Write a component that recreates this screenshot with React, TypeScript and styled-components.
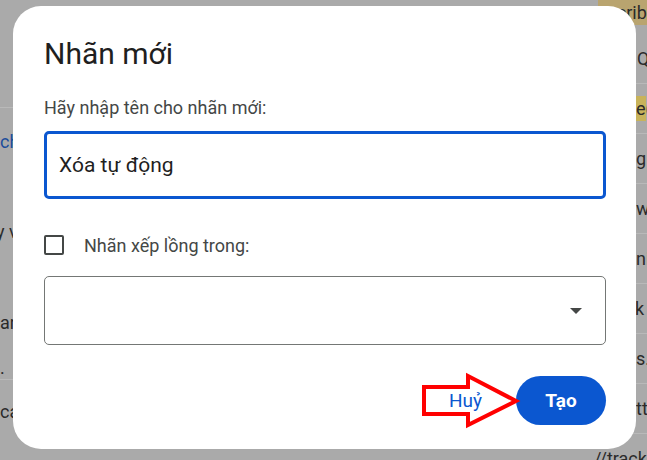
import React from 'react';
import styled, { createGlobalStyle } from 'styled-components';

const GlobalStyle = createGlobalStyle`
  html, body {
    margin: 0;
    padding: 0;
    background: #aaaaaa;
  }
  body {
    font-family: Roboto, "Liberation Sans", Arial, sans-serif;
  }
`;

// Whole window: dimmed mail list with the dialog over it
const Screen = styled.div`
  position: relative;
  width: 647px;
  height: 460px;
  overflow: hidden;
  background: #aaaaaa;
  display: flex;
  justify-content: space-between;
`;

// Left pane of the mail list (mostly hidden)
const LeftPane = styled.div`
  width: 40px;
  display: flex;
  flex-direction: column;
`;

const LeftRow = styled.div<{ h: number; line?: boolean; blue?: boolean; shift?: number }>`
  height: ${(p) => p.h}px;
  box-sizing: border-box;
  display: flex;
  align-items: center;
  margin-left: ${(p) => p.shift || 0}px;
  white-space: nowrap;
  font-size: 18px;
  color: ${(p) => (p.blue ? '#1b4d9b' : '#2a2a2a')};
  border-bottom: ${(p) => (p.line ? '1px solid #b9b9b9' : 'none')};
`;

// Right pane of the mail list (only a sliver shows)
const RightPane = styled.div`
  width: 57px;
  display: flex;
  flex-direction: column;
`;

const RightRow = styled.div<{ indent: number; h?: number }>`
  height: ${(p) => p.h || 50}px;
  flex-shrink: 0;
  box-sizing: border-box;
  padding-left: ${(p) => p.indent}px;
  display: flex;
  align-items: center;
  white-space: nowrap;
  font-size: 18px;
  color: #2a2a2a;
  border-bottom: 1px solid #b9b9b9;
`;

const TopRow = styled(RightRow)`
  align-items: flex-start;
  border-bottom: none;
  margin-bottom: 12px;
`;

const Mark = styled.span<{ tone: string }>`
  background: ${(p) => p.tone};
  padding: 2px 0;
`;

// Dialog
const Dialog = styled.div`
  position: absolute;
  left: 13px;
  top: 6px;
  width: 623px;
  height: 443px;
  box-sizing: border-box;
  padding: 30px 30px 0 31px;
  background: #fff;
  border-radius: 28px;
  display: flex;
  flex-direction: column;
`;

const Title = styled.h2`
  margin: 0;
  font-weight: 400;
  font-size: 30px;
  line-height: 36px;
  color: #1f1f1f;
`;

const FieldLabel = styled.div`
  margin-top: 24px;
  font-size: 18px;
  line-height: 24px;
  color: #444746;
`;

const TextInput = styled.input`
  margin-top: 11px;
  height: 68px;
  box-sizing: border-box;
  border: 3px solid #0b57d0;
  border-radius: 5px;
  padding: 0 12px;
  font-family: Roboto, "Liberation Sans", Arial, sans-serif;
  font-size: 21px;
  color: #1f1f1f;
  outline: none;
`;

const CheckRow = styled.label`
  margin-top: 36px;
  height: 20px;
  display: flex;
  align-items: center;
  gap: 20px;
  font-size: 18px;
  color: #444746;
`;

const CheckBox = styled.span`
  width: 20px;
  height: 20px;
  box-sizing: border-box;
  border: 2px solid #444746;
  border-radius: 2px;
`;

const Select = styled.div`
  margin-top: 21px;
  height: 69px;
  box-sizing: border-box;
  border: 1px solid #747775;
  border-radius: 5px;
  display: flex;
  align-items: center;
  justify-content: flex-end;
  padding-right: 23px;
`;

const Caret = styled.span`
  width: 0;
  height: 0;
  border-left: 6px solid transparent;
  border-right: 6px solid transparent;
  border-top: 6px solid #444746;
`;

const Actions = styled.div`
  margin-top: 31px;
  display: flex;
  justify-content: flex-end;
  align-items: center;
  gap: 18px;
`;

const Button = styled.button<{ primary?: boolean }>`
  height: 49px;
  border: none;
  border-radius: 25px;
  padding: 0 ${(p) => (p.primary ? '29px' : '16px')};
  min-width: ${(p) => (p.primary ? '90px' : '0')};
  background: ${(p) => (p.primary ? '#0b57d0' : 'transparent')};
  color: ${(p) => (p.primary ? '#fff' : '#0b57d0')};
  font-family: Roboto, "Liberation Sans", Arial, sans-serif;
  font-size: 19px;
  font-weight: ${(p) => (p.primary ? 700 : 400)};
  cursor: pointer;
`;

// Red annotation arrow pointing to the create button
const Arrow = styled.svg`
  position: absolute;
  left: 420px;
  top: 370px;
  width: 102px;
  height: 60px;
  overflow: visible;
`;

const rightRows: { indent: number; content: React.ReactNode }[] = [
  { indent: 47, content: 'Q' },
  { indent: 46, content: <><Mark tone="#c8b35a">e</Mark> (</> },
  { indent: 46, content: 'g' },
  { indent: 46, content: 'w' },
  { indent: 46, content: 'ni' },
  { indent: 45, content: 'k' },
  { indent: 46, content: 's.' },
  { indent: 46, content: 'tt' },
  { indent: 4, content: '//track' },
];

const App: React.FC = () => {
  return (
    <>
      <GlobalStyle />
      <Screen>
        <LeftPane>
          <LeftRow h={108} line />
          <LeftRow h={66} blue>ch</LeftRow>
          <LeftRow h={114} shift={-4}>y v</LeftRow>
          <LeftRow h={68}>an</LeftRow>
          <LeftRow h={24} line>.</LeftRow>
          <LeftRow h={62}>ca</LeftRow>
        </LeftPane>
        <RightPane>
          <TopRow indent={8} h={22}>
            <Mark tone="#b9a46f">escrib</Mark>
          </TopRow>
          {rightRows.map((r, i) => (
            <RightRow key={i} indent={r.indent}>
              {r.content}
            </RightRow>
          ))}
        </RightPane>

        <Dialog>
          <Title>Nhãn mới</Title>
          <FieldLabel>Hãy nhập tên cho nhãn mới:</FieldLabel>
          <TextInput defaultValue="Xóa tự động" />
          <CheckRow>
            <CheckBox />
            Nhãn xếp lồng trong:
          </CheckRow>
          <Select>
            <Caret />
          </Select>
          <Actions>
            <Button>Huỷ</Button>
            <Button primary>Tạo</Button>
          </Actions>
        </Dialog>

        <Arrow viewBox="0 0 102 60">
          <polygon
            points="4,17 48,17 48,6 96,31 48,55 48,44 4,44"
            fill="none"
            stroke="#ff0000"
            strokeWidth="4"
            strokeLinejoin="miter"
          />
        </Arrow>
      </Screen>
    </>
  );
};

export default App;
